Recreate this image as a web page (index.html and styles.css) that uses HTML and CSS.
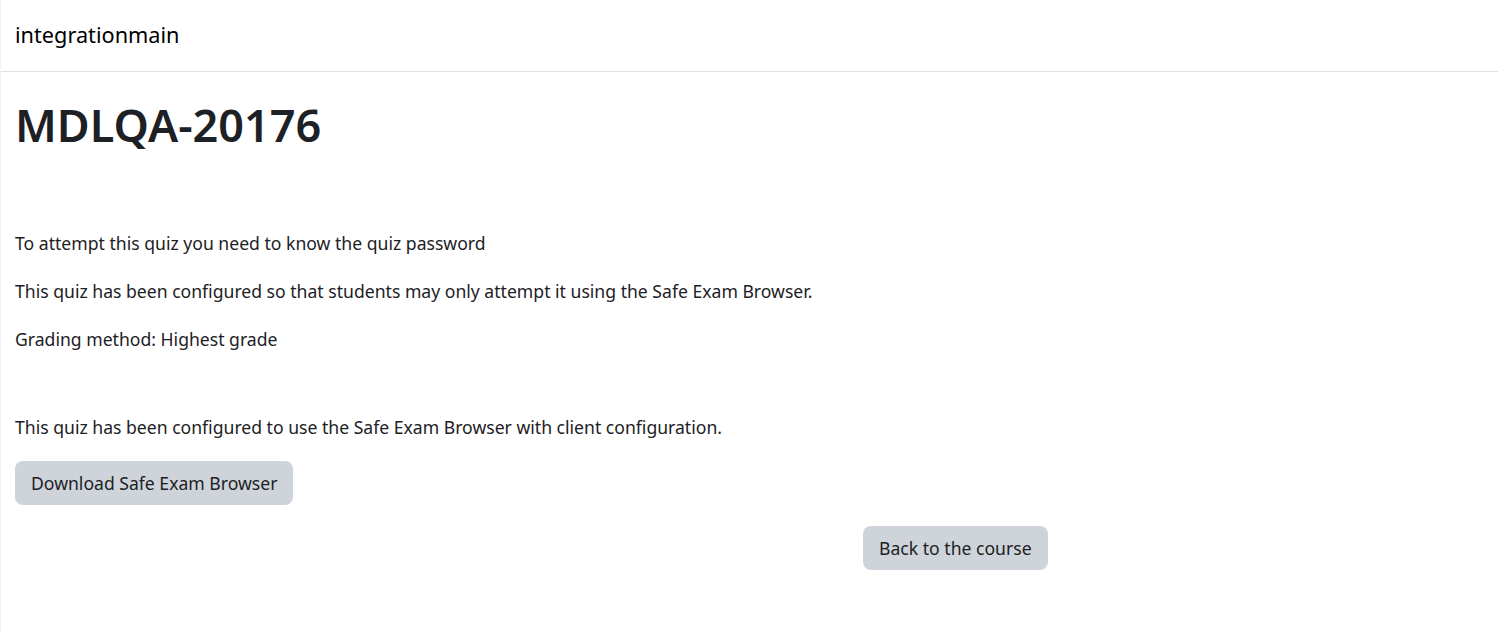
FILE: index.html
```html
<!DOCTYPE html>
<html lang="en">
<head>
<meta charset="utf-8">
<title>MDLQA-20176</title>
<link rel="stylesheet" href="styles.css">
</head>
<body>
<div class="page">
  <header class="navbar">
    <span class="brand">integrationmain</span>
  </header>
  <main class="content">
    <h1 class="title">MDLQA-20176</h1>
    <div class="info">
      <p>To attempt this quiz you need to know the quiz password</p>
      <p>This quiz has been configured so that students may only attempt it using the Safe Exam Browser.</p>
      <p>Grading method: Highest grade</p>
    </div>
    <div class="seb">
      <p>This quiz has been configured to use the Safe Exam Browser with client configuration.</p>
      <div class="btnrow"><button class="btn">Download Safe Exam Browser</button></div>
    </div>
    <div class="back">
      <button class="btn">Back to the course</button>
    </div>
  </main>
</div>
</body>
</html>
```
FILE: styles.css
```css
html, body {
  margin: 0;
  padding: 0;
  background: #fff;
}
body {
  font-family: "Noto Sans", "Open Sans", sans-serif;
  color: #1d2125;
  font-size: 17.6px;
}
.page {
  min-height: 631px;
  border-left: 1px solid #f2f2f2;
  box-sizing: border-box;
}
.navbar {
  height: 72px;
  border-bottom: 1px solid #dee2e6;
  display: flex;
  align-items: center;
  padding-left: 14px;
  padding-bottom: 3px;
  box-sizing: border-box;
}
.brand {
  font-size: 21.7px;
  color: #000;
}
.content {
  padding: 0 14px;
}
.title {
  margin: 21px 0 0;
  font-size: 45px;
  font-weight: 600;
  line-height: 58px;
  padding-top: 3px;
}
.info {
  margin-top: 76px;
}
.info p, .seb p {
  margin: 0 0 22px;
  line-height: 26px;
}
.seb {
  margin-top: 62px;
}
.btnrow {
  margin-top: -1px;
}
.btn {
  font-family: inherit;
  font-size: 17.6px;
  color: #1d2125;
  background: #ced4da;
  border: 0;
  border-radius: 8px;
  height: 44px;
  padding: 0 16px;
}
.back {
  margin-top: 21px;
  padding-left: 848px;
}
```
